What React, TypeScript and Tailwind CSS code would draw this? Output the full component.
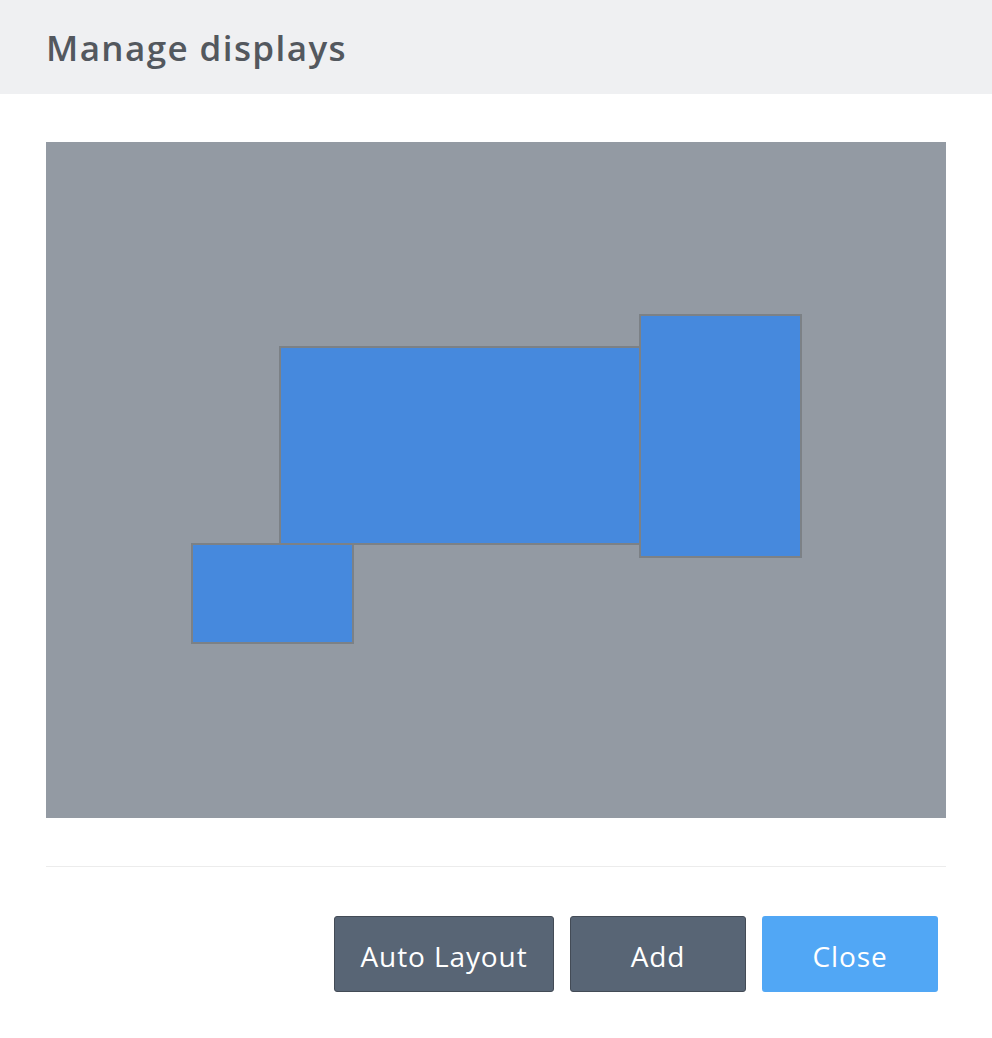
import React from 'react';

interface Display {
  id: string;
  left: number;
  top: number;
  width: number;
  height: number;
}

// positions of the monitors inside the arrangement canvas
const displays: Display[] = [
  { id: 'main', left: 233, top: 204, width: 362, height: 199 },
  { id: 'side', left: 593, top: 172, width: 163, height: 244 },
  { id: 'small', left: 145, top: 401, width: 163, height: 101 },
];

export default function App() {
  return (
    <div
      className="min-h-screen w-full bg-white"
      style={{ fontFamily: '"Open Sans", Lato, "Liberation Sans", sans-serif' }}
    >
      {/* header */}
      <div className="flex h-[94px] items-center bg-[#eff0f2] pl-[46px]">
        <h1 className="text-[35px] leading-none font-semibold tracking-[1.4px] text-[#53585e]">Manage displays</h1>
      </div>

      <div className="px-[46px] pt-[48px]">
        {/* arrangement canvas */}
        <div className="relative h-[676px] w-full bg-[#939aa3]">
          {displays.map((d) => (
            <div
              key={d.id}
              className="absolute border-2 border-[#7c8186] bg-[#4689dd]"
              style={{ left: d.left, top: d.top, width: d.width, height: d.height }}
            />
          ))}
        </div>

        <div className="mt-[48px] h-px w-full bg-[#ececec]" />

        {/* actions */}
        <div className="flex justify-end gap-4 pr-2 pt-[49px]">
          <button className="h-[76px] w-[220px] rounded-[3px] border border-[#434b56] bg-[#586575] pt-1 text-[28px] tracking-[0.9px] text-white">
            Auto Layout
          </button>
          <button className="h-[76px] w-[176px] rounded-[3px] border border-[#434b56] bg-[#586575] pt-1 text-[28px] tracking-[0.9px] text-white">
            Add
          </button>
          <button className="h-[76px] w-[176px] rounded-[3px] bg-[#51a7f5] pt-1 text-[28px] tracking-[0.9px] text-white">
            Close
          </button>
        </div>
      </div>
    </div>
  );
}
